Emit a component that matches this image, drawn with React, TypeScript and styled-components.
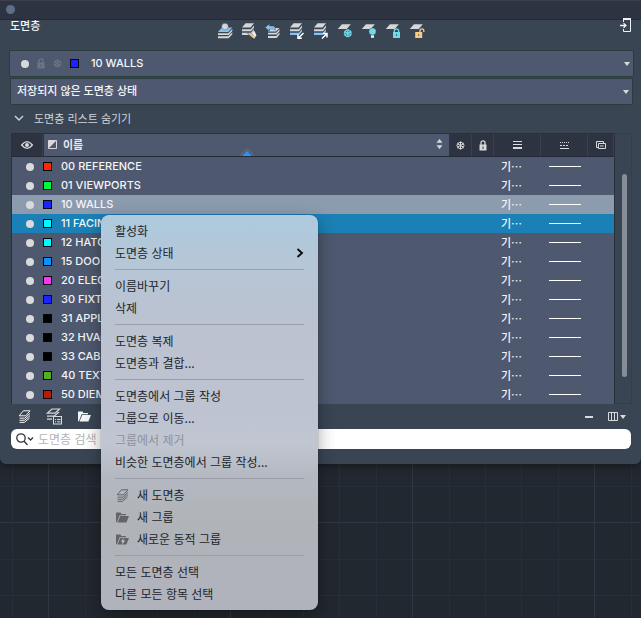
import React from "react";
import styled, { createGlobalStyle } from "styled-components";

const color = {
  panel: "#3a4554",
  field: "#4e596f",
  header: "#2d3340",
  edge: "#2a313d",
  fieldEdge: "#2b3c3e",
  light: "#d9dadc",
  text: "#f4f5f7",
};
const korean = `"Noto Sans CJK KR", sans-serif`;
const mixed = `Inter, "Noto Sans CJK KR", sans-serif`;

const GlobalStyle = createGlobalStyle`
  *, *::before, *::after { box-sizing: border-box; }
  html, body, #root { height: 100%; }
  body { margin: 0; background: #222830; font-family: ${korean}; font-size: 11px; color: ${color.text}; overflow: hidden; }
  button, input, select { font: inherit; color: inherit; margin: 0; padding: 0; border: 0; background: none; }
  svg { display: block; }
`;

const minor = "#272e38";
const major = "#303742";
const gridStops = `${major} 0 1px, transparent 1px 37px, ${minor} 37px 38px, transparent 38px 73px, ${minor} 73px 74px, transparent 74px 109px, ${minor} 109px 110px, transparent 110px 146px, ${minor} 146px 147px, transparent 147px 182px`;

const Canvas = styled.div`
  position: relative;
  min-height: 100%;
  background-color: #222830;
  background-image: linear-gradient(90deg, ${gridStops}), linear-gradient(180deg, ${gridStops});
  background-size: 182px 182px;
  background-position: 48px 0, 0 522px;
`;

const Panel = styled.section`
  background: ${color.panel};
  border-radius: 0 0 6px 6px;
  padding-bottom: 15px;
  box-shadow: 0 1px 8px rgba(0, 0, 0, 0.5);
`;

const TitleBar = styled.div`
  display: flex;
  align-items: center;
  height: 20px;
  padding-left: 6px;
  background: ${color.header};
  border-top: 1px solid #3a414e;
  border-bottom: 1px solid #242b36;
`;

const CloseButton = styled.button`
  width: 9px;
  height: 9px;
  margin-bottom: 1px;
  border-radius: 50%;
  background: #5f6e88;
`;

const Heading = styled.header`
  position: relative;
  display: grid;
  grid-template-columns: 1fr auto 1fr;
  align-items: start;
  height: 30px;
  padding: 0 10px;
`;

const Title = styled.h1`
  margin: 0;
  font-size: 11px;
  font-weight: 500;
  line-height: 10px;
`;

const Tools = styled.div`
  display: flex;
  gap: 8px;
  padding-top: 3px;
`;

const IconButton = styled.button`
  display: flex;
  align-items: center;
  justify-content: center;
`;

const DockButton = styled(IconButton)`
  position: absolute;
  top: -3px;
  right: 10px;
`;

const Field = styled.label<{ $inset: number }>`
  display: grid;
  grid-template-columns: auto 1fr auto;
  align-items: center;
  height: 27px;
  margin: 0 ${(p) => p.$inset - 2}px 1px ${(p) => p.$inset}px;
  padding: 0 3px 0 6px;
  background: ${color.field};
  border: 1px solid ${color.fieldEdge};
  border-radius: 2px;
  line-height: 15px;
`;

const Status = styled.span`
  display: flex;
  align-items: center;
  gap: 8px;
  padding: 0 12px 0 5px;
`;

const Picker = styled.select`
  appearance: none;
  width: 100%;
  padding-bottom: 1px;
  outline: 0;
  font-family: ${mixed};
  font-weight: 500;
`;

const Dot = styled.span`
  display: block;
  width: 8px;
  height: 8px;
  border-radius: 50%;
  background: ${color.light};
`;

const Swatch = styled.span<{ $fill: string }>`
  flex: none;
  width: 9px;
  height: 9px;
  border: 1px solid #06080c;
  background: ${(p) => p.$fill};
`;

const Toggle = styled.button`
  display: flex;
  align-items: center;
  gap: 10px;
  height: 24px;
  padding-left: 14px;
  color: #d0d5dc;
`;

const ListFrame = styled.div`
  display: grid;
  grid-template-columns: 1fr 17px;
  margin: 3px 9px 0 11px;
`;

const Table = styled.table`
  width: 100%;
  table-layout: fixed;
  border-spacing: 0;
  background: ${color.field};
  border: 1px solid ${color.edge};
  border-bottom: 0;
`;

const HeadCell = styled.th<{ $wide?: boolean }>`
  position: relative;
  height: 23px;
  padding: 0;
  background: ${(p) => (p.$wide ? color.field : color.header)};
  border-left: ${(p) => (p.$wide ? `1px solid ${color.header}` : "0")};
  border-right: 1px solid ${(p) => (p.$wide ? color.header : "#39414f")};
  border-bottom: 1px solid #242a35;

  > ${IconButton} { width: 100%; }
`;

const NameHead = styled.div`
  display: flex;
  align-items: center;
  gap: 6px;
  padding: 0 6px 2px 4px;
  font-weight: 700;
  line-height: 18px;
  color: #e6e8eb;

  > :last-child { margin-left: auto; }
`;

const SortMark = styled.svg`
  position: absolute;
  bottom: 0;
  left: calc(50% - 7px);
`;

const Row = styled.tr<{ $tone?: string }>`
  background: ${(p) => p.$tone ?? "transparent"};
`;

const Cell = styled.td`
  height: 19px;
  padding: 0;
  line-height: 17px;
  white-space: nowrap;
  overflow: hidden;
`;

const DotCell = styled(Cell)`
  padding-left: 14px;
`;

const WeightCell = styled(Cell)`
  padding-left: 7px;
  font-weight: 500;
`;

const LayerName = styled.span`
  display: flex;
  align-items: center;
  gap: 9px;
  font-family: ${mixed};
  font-weight: 500;
`;

const LineSample = styled.span`
  display: block;
  width: 32px;
  height: 1px;
  margin: 0 auto;
  background: #fff;
`;

const ScrollTrack = styled.div`
  padding: 40px 0 26px 7px;
  border: 1px solid #343e4c;
  border-left: 0;
`;

const ScrollThumb = styled.div`
  width: 5px;
  height: 100%;
  border-radius: 3px;
  background: #858d99;
`;

const Footer = styled.div`
  display: flex;
  align-items: center;
  height: 25px;
  padding: 0 15px 0 18px;
  gap: 15px;

  > :nth-child(4) { margin-left: auto; }
`;

const Search = styled.label`
  display: flex;
  align-items: center;
  gap: 4px;
  height: 20px;
  margin: 0 10px 0 11px;
  padding-left: 5px;
  border-radius: 6px;
  background: #fff;
  color: #30343a;
`;

const SearchInput = styled.input`
  flex: 1;
  min-width: 0;
  outline: 0;
  font-size: 12px;
  line-height: 18px;
  &::placeholder { color: #b4b4b6; opacity: 1; }
`;

const Menu = styled.div`
  position: absolute;
  left: 101px;
  top: 215px;
  width: 217px;
  padding: 5px 14px;
  border-radius: 8px;
  background: linear-gradient(#adcade 0, #b6c6d6 13%, #bbc2d0 26%, #bec3d1 50%, #c0c6d1 58%, #b4b8c1 66%, #b0b4b8 78%, #b0b3bd 100%);
  box-shadow: 0 0 1px rgba(0, 0, 0, 0.6), 0 6px 18px rgba(0, 0, 0, 0.35);
`;

const MenuItem = styled.button`
  display: flex;
  align-items: center;
  gap: 8px;
  width: 100%;
  height: 22px;
  font-size: 12px;
  line-height: 18px;
  color: #20242b;
  text-align: left;
  white-space: nowrap;

  &:disabled { color: #8e929c; }
  > svg { margin-left: 1px; color: #62646a; }
`;

const MenuArrow = styled.svg`
  && { margin-left: auto; color: #0b0d12; }
`;

const Divider = styled.hr`
  height: 1px;
  margin: 5px 0;
  border: 0;
  background: #9699a3;
  opacity: 0.85;
`;

const Caret = () => (
  <svg width="6" height="4" viewBox="0 0 6 4" fill={color.light} aria-hidden="true"><path d="M0 0H6L3 4Z" /></svg>
);

const Lock = ({ fill = color.light }: { fill?: string }) => (
  <svg width="8" height="11" viewBox="0 0 8 11" aria-hidden="true">
    <path d="M2 5V2.8a2 2 0 0 1 4 0V5" fill="none" stroke={fill} strokeWidth="1.3" />
    <path fillRule="evenodd" d="M0.5 4.6h7v6h-7zM3.5 6.5v2.4h1V6.5z" fill={fill} />
  </svg>
);

const flake = "M4.5 0.5V8.5M1 2.5L8 6.5M8 2.5L1 6.5M3 1l1.5 1.3L6 1M3 8l1.5-1.3L6 8M0.6 4.1L2.4 3.4 2.2 1.4M8.4 4.9L6.6 5.6 6.8 7.6M8.4 4.1L6.6 3.4 6.8 1.4M0.6 4.9L2.4 5.6 2.2 7.6";
const Snow = ({ stroke = color.light }: { stroke?: string }) => (
  <svg width="9" height="9" viewBox="0 0 9 9" fill="none" stroke={stroke} strokeWidth="1" aria-hidden="true"><path d={flake} /></svg>
);

const grey = "#d4d6d9";
const sky = "#84c4f5";
const teal = "#6fdbe4";
const amber = "#fbcb82";

const Stack = ({ last = grey }: { last?: string }) => (
  <>
    <path d="M4.5 0.3H13L9.5 4.4H1Z" fill={grey} />
    <path d="M1 6.2H9.8L13 2.6V4.8L10 8.3H1Z" fill={grey} />
    <path d="M1 9.8H9.8L13 6.2V8.4L10 12H1Z" fill={last} />
  </>
);
const Sheet = () => <path d="M5 1.2H13.8L9.8 6H0.8Z" fill={grey} />;

const tools: [string, React.ReactNode][] = [
  ["현재로 설정", <>
    <path d="M5 4.5H15.3L11.2 9H1Z" fill={sky} />
    <circle cx="8" cy="3.6" r="3.3" fill={grey} stroke={color.panel} strokeWidth="0.4" />
    <path d="M1 10.2H11.2L15.3 6V8L11.6 12H1ZM1 13.2H11.2L15.3 9.2V11.2L11.6 15.2H1Z" fill={grey} />
  </>],
  ["도면층 일치", <>
    <Stack />
    <path d="M6.5 10.5L9 9.5L15 14L13 16Z" fill={amber} stroke={color.panel} strokeWidth="0.5" />
    <path d="M10.8 10.5L13.5 8L15.5 12.5L14 14Z" fill="#eef0f2" />
  </>],
  ["이전 도면층", <>
    <path d="M6 5H14.5L11 8.6H3Z" fill={grey} />
    <path d="M3 9.8H11.2L14.5 6.3V8.3L11.6 11.6H3ZM3 12.9H11.2L14.5 9.4V11.4L11.6 15H3Z" fill={grey} />
    <path d="M0 4.5L4.5 1V3H7.5Q10.5 3 10.5 7.2Q9 6 7 6H4.5V8Z" fill={sky} stroke={color.panel} strokeWidth="0.4" />
  </>],
  ["도면층 분리", <>
    <Stack last={sky} />
    <path d="M14.5 10L9.5 15M9 11.5V15.3H12.8" fill="none" stroke="#fff" strokeWidth="1.5" />
  </>],
  ["도면층 분리 해제", <>
    <Stack last={sky} />
    <path d="M9 15.5L13.5 11M10 10.6H14V14.5" fill="none" stroke="#fff" strokeWidth="1.5" />
  </>],
  ["도면층 동결", <>
    <Sheet />
    <g transform="translate(6.3 5.8)" fill="none" stroke={teal} strokeWidth="1.2"><path d={flake} /></g>
  </>],
  ["도면층 끄기", <>
    <Sheet />
    <circle cx="11.5" cy="8.5" r="3.6" fill={teal} stroke={color.panel} strokeWidth="0.4" />
    <path d="M10 12.3H13V14.8H10Z" fill="#f2f3f4" />
  </>],
  ["도면층 잠금", <>
    <Sheet />
    <path d="M9.3 9.5V8a2.2 2.2 0 0 1 4.4 0V9.5" fill="none" stroke={teal} strokeWidth="1.3" />
    <path fillRule="evenodd" d="M8 9H15V15H8ZM11 11.2V12.8H12V11.2Z" fill={teal} />
  </>],
  ["도면층 잠금 해제", <>
    <Sheet />
    <path d="M11 9.5V7.7a1.9 1.9 0 0 1 3.8 0V9" fill="none" stroke={amber} strokeWidth="1.3" />
    <path fillRule="evenodd" d="M6.2 9H13.2V15H6.2ZM9.2 11.2V12.8H10.2V11.2Z" fill={amber} />
  </>],
];

const LayerOutline = () => (
  <svg width="13" height="13" viewBox="0 0 13 13" fill="none" stroke="currentColor" strokeWidth="1" aria-hidden="true">
    <path d="M5.4 0.8H12L7.6 5.8H1.2ZM1.6 8.2H6.8L12 3.4M1.6 10.3H6.6L12 5.6M1.6 12.4H6.4L11.5 8" />
  </svg>
);

const Folder = ({ dynamic }: { dynamic?: boolean }) => (
  <svg width="13" height="11" viewBox="0 0 13 11" aria-hidden="true">
    <path d="M0 10.5V0.5H4.5L5.5 2H10V3.2H3.6L1 10Z" fill="currentColor" />
    <path d="M4.2 4H13L10.4 10.5H1.5Z" fill="currentColor" />
    {dynamic && <path d="M7.6 4.2L5 7.6H6.8L5.8 10.4L9 6.8H7.2Z" fill="#d4d6da" />}
  </svg>
);

const layers: [string, string][] = [
  ["00 REFERENCE", "#ff2600"],
  ["01 VIEWPORTS", "#00f93e"],
  ["10 WALLS", "#1b24ff"],
  ["11 FACIN", "#00fbff"],
  ["12 HATC", "#00fbff"],
  ["15 DOO", "#0a93ff"],
  ["20 ELEC", "#ff35f5"],
  ["30 FIXT", "#1b24ff"],
  ["31 APPL", "#000000"],
  ["32 HVAC", "#000000"],
  ["33 CAB", "#000000"],
  ["40 TEXT", "#55b01e"],
  ["50 DIEM", "#b91a00"],
];
const tones: Record<number, string> = { 2: "#8c9bae", 3: "#1b80b5" };

type Entry = { text: string; icon?: React.ReactNode; arrow?: boolean; disabled?: boolean };
const menu: Entry[][] = [
  [{ text: "활성화" }, { text: "도면층 상태", arrow: true }],
  [{ text: "이름바꾸기" }, { text: "삭제" }],
  [{ text: "도면층 복제" }, { text: "도면층과 결합..." }],
  [
    { text: "도면층에서 그룹 작성" },
    { text: "그룹으로 이동..." },
    { text: "그룹에서 제거", disabled: true },
    { text: "비슷한 도면층에서 그룹 작성..." },
  ],
  [
    { text: "새 도면층", icon: <LayerOutline /> },
    { text: "새 그룹", icon: <Folder /> },
    { text: "새로운 동적 그룹", icon: <Folder dynamic /> },
  ],
  [{ text: "모든 도면층 선택" }, { text: "다른 모든 항목 선택" }],
];

export default function App() {
  return (
    <Canvas lang="ko">
      <GlobalStyle />
      <Panel>
        <TitleBar><CloseButton aria-label="닫기" /></TitleBar>
        <Heading>
          <Title>도면층</Title>
          <Tools>
            {tools.map(([label, art]) => (
              <IconButton key={label} aria-label={label}>
                <svg width="16" height="16" viewBox="0 0 16 16">{art}</svg>
              </IconButton>
            ))}
          </Tools>
          <DockButton aria-label="고정">
            <svg width="11" height="16" viewBox="0 0 11 16" fill="none" stroke="#f0f1f3">
              <path d="M3.5 5V2.5H10.5V14.5H3.5V12" />
              <path d="M3 2H11" strokeWidth="2" />
              <path d="M0 8.5H5.5M3.5 6.3L6 8.5L3.5 10.7" strokeWidth="1.3" />
            </svg>
          </DockButton>
        </Heading>

        <Field $inset={9}>
          <Status>
            <Dot />
            <Lock fill="#6d7684" />
            <Snow stroke="#6d7684" />
            <Swatch $fill="#1b24ff" />
          </Status>
          <Picker aria-label="현재 도면층" defaultValue="10 WALLS">
            {layers.map(([name]) => <option key={name}>{name}</option>)}
          </Picker>
          <Caret />
        </Field>
        <Field $inset={10}>
          <span />
          <Picker aria-label="도면층 상태"><option>저장되지 않은 도면층 상태</option></Picker>
          <Caret />
        </Field>

        <Toggle aria-expanded="true">
          <svg width="10" height="6" viewBox="0 0 10 6" fill="none" stroke="currentColor" strokeWidth="1.4"><path d="M1 1L5 5L9 1" /></svg>
          도면층 리스트 숨기기
        </Toggle>

        <ListFrame>
          <Table>
            <colgroup>
              <col width="31" /><col /><col width="22" /><col width="22" /><col width="47" /><col width="47" /><col width="26" />
            </colgroup>
            <thead>
              <tr>
                <HeadCell>
                  <IconButton aria-label="표시">
                    <svg width="12" height="8" viewBox="0 0 12 8" fill="none" stroke={color.light}>
                      <path d="M0.6 4Q6-2.6 11.4 4Q6 10.6 0.6 4Z" strokeWidth="1.3" />
                      <circle cx="6" cy="4" r="2" fill={color.light} stroke="none" />
                    </svg>
                  </IconButton>
                </HeadCell>
                <HeadCell $wide>
                  <NameHead>
                    <svg width="9" height="9" viewBox="0 0 9 9"><path d="M0.5 0.5H8.5V8.5H0.5Z" fill="none" stroke={color.light} /><path d="M0.5 8.5V0.5H8.5Z" fill={color.light} /></svg>
                    이름
                    <svg width="7" height="10" viewBox="0 0 7 10" fill={color.light}><path d="M3.5 0L6.5 3.8H0.5ZM3.5 10L6.5 6.2H0.5Z" /></svg>
                  </NameHead>
                  <SortMark width="14" height="7" viewBox="0 0 14 7">
                    <path d="M0.5 6L6 0.7H8L13.5 6" fill="none" stroke="#748095" strokeWidth="0.7" />
                    <path d="M2 7L7 2L12 7Z" fill="#2c94f2" />
                  </SortMark>
                </HeadCell>
                <HeadCell><IconButton aria-label="동결"><Snow /></IconButton></HeadCell>
                <HeadCell><IconButton aria-label="잠금"><Lock /></IconButton></HeadCell>
                <HeadCell>
                  <IconButton aria-label="선가중치">
                    <svg width="9" height="8" viewBox="0 0 9 8" fill={color.light}><path d="M0 0H9V1H0ZM0 3H9V4H0ZM0 6H9V8H0Z" /></svg>
                  </IconButton>
                </HeadCell>
                <HeadCell>
                  <IconButton aria-label="선종류">
                    <svg width="9" height="7" viewBox="0 0 9 7" stroke={color.light}><path d="M0 0.5H9" strokeDasharray="1 1" /><path d="M0 3.5H9" strokeDasharray="2 1" /><path d="M0 6.5H9" /></svg>
                  </IconButton>
                </HeadCell>
                <HeadCell>
                  <IconButton aria-label="뷰포트">
                    <svg width="10" height="8" viewBox="0 0 10 8" fill="none" stroke={color.light}><path d="M7.5 2V0.5H0.5V6.5H2.5M2.5 2.5H9.5V7.5H2.5ZM4 5H7.5" /></svg>
                  </IconButton>
                </HeadCell>
              </tr>
            </thead>
            <tbody>
              {layers.map(([name, fill], i) => (
                <Row key={name} $tone={tones[i]}>
                  <DotCell><Dot /></DotCell>
                  <Cell><LayerName><Swatch $fill={fill} />{name}</LayerName></Cell>
                  <Cell />
                  <Cell />
                  <WeightCell>기⋯</WeightCell>
                  <Cell><LineSample /></Cell>
                  <Cell />
                </Row>
              ))}
            </tbody>
          </Table>
          <ScrollTrack><ScrollThumb /></ScrollTrack>
        </ListFrame>

        <Footer>
          <IconButton aria-label="새 도면층"><LayerOutline /></IconButton>
          <IconButton aria-label="도면층 상태 관리">
            <svg width="17" height="17" viewBox="0 0 17 17" fill="none" stroke={color.light}>
              <path d="M6 1H13.5L9 5.2H1.2ZM1 8.2H8L13 4M1 11.2H6" strokeWidth="1.2" />
              <rect x="7.5" y="8.5" width="8" height="7.5" fill={color.panel} />
              <path d="M9 11.5H10M11 11.5H14.5M9 13.8H10M11 13.8H14.5" />
            </svg>
          </IconButton>
          <IconButton aria-label="새 그룹"><Folder /></IconButton>
          <IconButton aria-label="삭제">
            <svg width="8" height="2" viewBox="0 0 8 2"><path d="M0 0H8V2H0Z" fill={color.light} /></svg>
          </IconButton>
          <IconButton aria-label="열">
            <svg width="18" height="9" viewBox="0 0 18 9" fill="none" stroke={color.light}>
              <path d="M0.5 0.5H9.5V8.5H0.5ZM3.5 0V9M6.5 0V9" /><path d="M12 3H18L15 7Z" fill={color.light} stroke="none" />
            </svg>
          </IconButton>
        </Footer>

        <Search>
          <svg width="18" height="14" viewBox="0 0 18 14" fill="none" stroke="currentColor" strokeWidth="1.3">
            <circle cx="5" cy="6" r="4.2" /><path d="M8 9L11.5 13M12 5.5L14.5 8L17 5.5" />
          </svg>
          <SearchInput type="text" aria-label="도면층 검색" placeholder="도면층 검색" />
        </Search>
      </Panel>

      <Menu role="menu">
        {menu.map((group, g) => (
          <React.Fragment key={g}>
            {g > 0 && <Divider />}
            {group.map(({ text, icon, arrow, disabled }) => (
              <MenuItem key={text} role="menuitem" disabled={disabled}>
                {icon}
                {text}
                {arrow && (
                  <MenuArrow width="8" height="10" viewBox="0 0 8 10" fill="none" stroke="currentColor" strokeWidth="1.9"><path d="M1.5 1L6 5L1.5 9" /></MenuArrow>
                )}
              </MenuItem>
            ))}
          </React.Fragment>
        ))}
      </Menu>
    </Canvas>
  );
}
